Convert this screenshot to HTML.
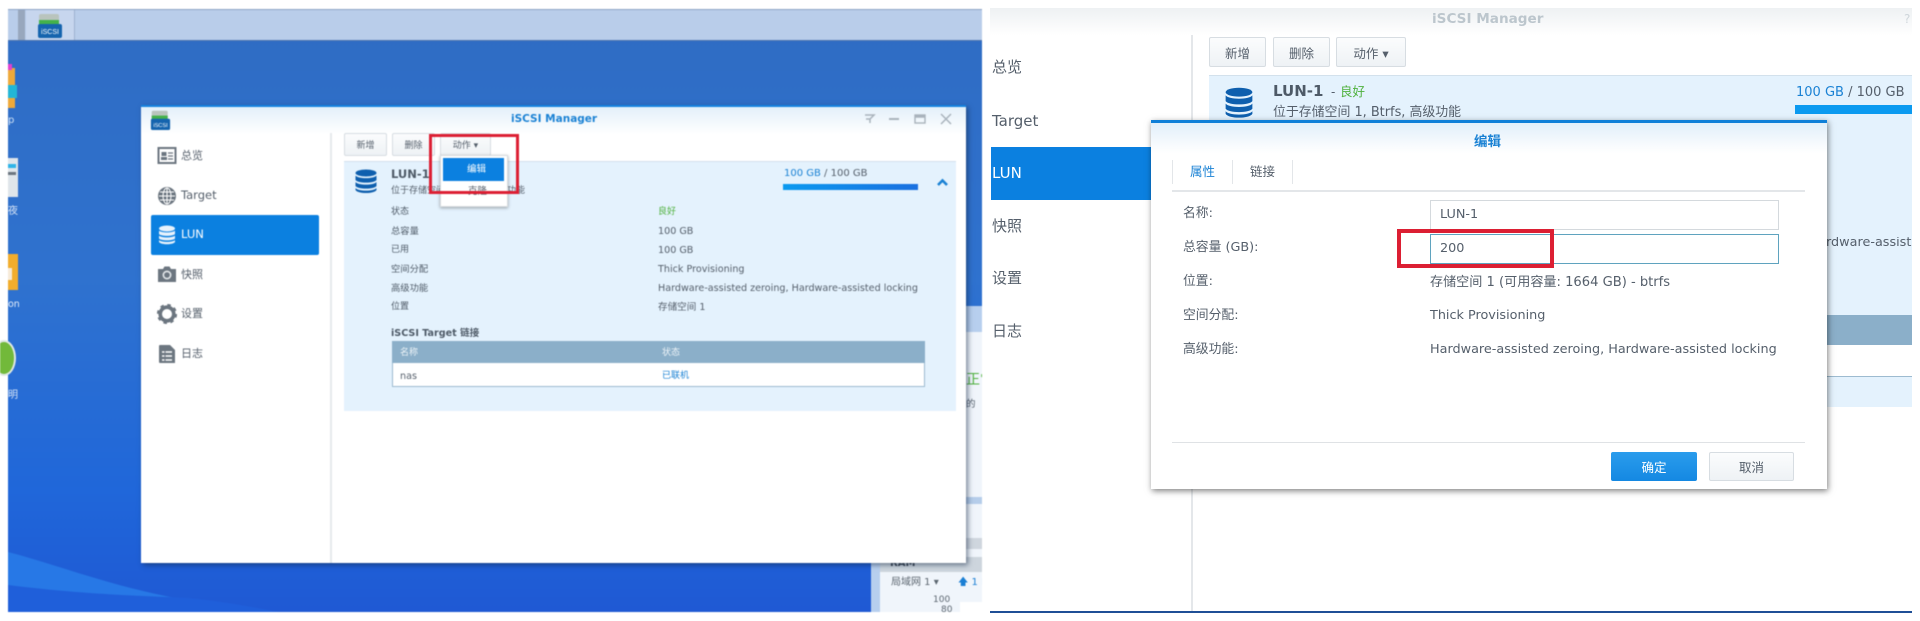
<!DOCTYPE html>
<html lang="zh">
<head>
<meta charset="utf-8">
<title>iSCSI Manager</title>
<style>
html,body{margin:0;padding:0;background:#fff}
body{width:1920px;height:621px;position:relative;overflow:hidden;font-family:"DejaVu Sans","Noto Sans CJK SC",sans-serif;color:#555f6b}
div,span,svg{box-sizing:border-box}
.a{position:absolute}
.t{position:absolute;white-space:nowrap;line-height:1}
.b{font-weight:bold}
.left{position:absolute;left:0;top:0;width:982px;height:621px;overflow:hidden;filter:blur(.6px)}
.right{position:absolute;left:982px;top:0;width:938px;height:621px;overflow:hidden;filter:blur(.25px)}
.btn{position:absolute;background:linear-gradient(#fbfcfd,#eef2f5);border:1px solid #d7dde2;border-radius:2px;text-align:center}
</style>
</head>
<body>
<div class="left">
  <div class="a" style="left:8px;top:9px;width:974px;height:603px;background:linear-gradient(#2f6cc3 0,#2f72cf 45%,#2067da 80%,#1f59d4 100%)"></div>
  <svg class="a" style="left:8px;top:530px" width="974" height="82" viewBox="0 0 974 82">
    <path d="M0 22C70 40 130 70 270 82L0 82Z" fill="#2778e6"/>
    <path d="M0 55C80 65 140 66 180 68C220 72 250 78 270 82L0 82Z" fill="#1f5fda"/>
  </svg>
  <div class="a" style="left:8px;top:9px;width:974px;height:32px;background:#b9cdea;border-top:1px solid #8ea4c6;border-bottom:1px solid #4d74ae"></div>
  <div class="a" style="left:18px;top:10px;width:7px;height:30px;background:#98a7bd"></div>
  <div class="a" style="left:26px;top:10px;width:49px;height:30px;background:#c7d6ee;border-right:1px solid #9fb2cf"></div>
  <svg class="a" style="left:37px;top:13px" width="26" height="26" viewBox="0 0 26 26">
    <rect x="2" y="1" width="20" height="12" rx="2" fill="#b9c4bd"/><rect x="2" y="7" width="20" height="6" fill="#44b24a"/>
    <rect x="1" y="11" width="24" height="14" rx="2" fill="#1564ae"/>
    <text x="13" y="21" font-size="7" fill="#fff" text-anchor="middle" font-family="Liberation Sans,sans-serif">iSCSI</text>
  </svg>

  <!-- desktop icons clipped -->
  <div class="a" style="left:8px;top:68px;width:7px;height:40px;background:#eea93a"></div>
  <div class="a" style="left:8px;top:64px;width:4px;height:6px;background:#e23fd0"></div>
  <div class="a" style="left:8px;top:85px;width:9px;height:13px;background:#23b6d6"></div>
  <div class="t" style="left:8px;top:116px;font-size:10px;color:#cfe0f5">p</div>
  <div class="a" style="left:8px;top:158px;width:10px;height:39px;background:#dfe5ea"></div>
  <div class="a" style="left:8px;top:164px;width:8px;height:4px;background:#2fb4e8"></div>
  <div class="a" style="left:8px;top:172px;width:8px;height:3px;background:#6c7680"></div>
  <div class="t" style="left:8px;top:207px;font-size:10px;color:#d8e5f6">夜</div>
  <div class="a" style="left:8px;top:254px;width:10px;height:36px;background:#f2ad2c"></div>
  <div class="a" style="left:8px;top:268px;width:4px;height:12px;background:#f6ead8"></div>
  <div class="t" style="left:8px;top:300px;font-size:9.5px;color:#e4edf9">on</div>
  <div class="a" style="left:-8px;top:340px;width:24px;height:36px;border-radius:50%;background:#72b93a;border:2px solid #dfe8e4"></div>
  <div class="t" style="left:8px;top:391px;font-size:10px;color:#d8e5f6">明</div>

  <!-- widgets behind the window -->
  <div class="a" style="left:871px;top:306px;width:111px;height:306px;background:#b7cfee"></div>
  <div class="a" style="left:880px;top:332px;width:102px;height:280px;background:#f0f5fb"></div>
  <div class="t" style="left:966px;top:373px;font-size:14px;color:#4fb13d">正常</div>
  <div class="t" style="left:966px;top:400px;font-size:9.5px;color:#55606c">的</div>
  <div class="a" style="left:880px;top:497px;width:102px;height:7px;background:#b5cdea"></div>
  <div class="a" style="left:880px;top:538px;width:102px;height:11px;background:#cfd6de"></div>
  <div class="a" style="left:880px;top:557px;width:102px;height:15px;background:#cdd5dd"></div>
  <div class="t b" style="left:890px;top:559px;font-size:10px;color:#3d4650">RAM</div>
  <div class="t" style="left:891px;top:578px;font-size:10px;color:#5c6670">局域网 1 ▾</div>
  <div class="t" style="left:958px;top:578px;font-size:10px;color:#1b7fd4">🡅 1 K</div>
  <div class="t" style="left:933px;top:596px;font-size:9px;color:#5c6670">100</div>
  <div class="t" style="left:941px;top:606px;font-size:9px;color:#5c6670">80</div>
  <div class="a" style="left:960px;top:602px;width:22px;height:10px;background:#fff"></div>

  <!-- main window -->
  <div class="a" style="left:141px;top:105px;width:825px;height:458px;background:#fff;border-top:2px solid #1683e0;box-shadow:2px 2px 5px rgba(20,40,70,.55)">
    <div class="a" style="left:0;top:0;width:100%;height:27px;background:linear-gradient(#e4f0fa,#fff)"></div>
  </div>
  <svg class="a" style="left:150px;top:110px" width="21" height="20" viewBox="0 0 26 25">
    <rect x="2" y="1" width="20" height="12" rx="2" fill="#b9c4bd"/><rect x="2" y="7" width="20" height="6" fill="#44b24a"/>
    <rect x="1" y="11" width="24" height="14" rx="2" fill="#1564ae"/>
    <text x="13" y="21" font-size="7" fill="#fff" text-anchor="middle" font-family="Liberation Sans,sans-serif">iSCSI</text>
  </svg>
  <div class="t b" style="left:511px;top:114px;font-size:10.5px;color:#1b82d4">iSCSI Manager</div>
  <!-- window controls -->
  <svg class="a" style="left:862px;top:112px" width="96" height="14" viewBox="0 0 96 14" fill="none" stroke="#a9b3bc" stroke-width="1.5">
    <path d="M3 3H12L8 7V11M4 7H8"/>
    <path d="M27 7H37" stroke-width="2"/>
    <rect x="53" y="3" width="10" height="8" stroke-width="1.4"/><path d="M53 4.500H63" stroke-width="2.500"/>
    <path d="M79 2L89 12M89 2L79 12"/>
  </svg>

  <!-- sidebar -->
  <div class="a" style="left:330px;top:133px;width:1.5px;height:430px;background:#e6e9ec"></div>
  <div class="a" style="left:151px;top:215px;width:168px;height:40px;background:#0b80e0;border-radius:2px"></div>
  <svg class="a" style="left:157px;top:146px" width="20" height="20" viewBox="0 0 20 20">
    <rect x="1.500" y="2" width="17" height="15" fill="#fff" stroke="#6c7680" stroke-width="2"/><rect x="4.500" y="6" width="5" height="4" fill="#6c7680"/><rect x="4" y="11" width="6" height="3" fill="#6c7680"/><path d="M11 7H16M11 10H16M11 13H16" stroke="#6c7680" stroke-width="1.300"/>
  </svg>
  <svg class="a" style="left:157px;top:186px" width="20" height="20" viewBox="0 0 20 20" fill="none" stroke="#fff" stroke-width="1">
    <circle cx="10" cy="10" r="9" fill="#6c7680" stroke="none"/><ellipse cx="10" cy="10" rx="4" ry="8"/><path d="M2 10H18M3 6H17M3 14H17M10 2V18"/>
  </svg>
  <svg class="a" style="left:158px;top:225px" width="18" height="20" viewBox="0 0 18 20" fill="#e7f2fc">
    <ellipse cx="9" cy="3.500" rx="8" ry="3"/><path d="M1 5.500C3 8 15 8 17 5.500V9C15 11.500 3 11.500 1 9Z"/><path d="M1 10.500C3 13 15 13 17 10.500V13.500C15 16 3 16 1 13.500Z"/><path d="M1 15C3 17.500 15 17.500 17 15V17C15 20 3 20 1 17Z"/>
  </svg>
  <svg class="a" style="left:157px;top:265px" width="20" height="18" viewBox="0 0 20 18">
    <path d="M1 4H6L7.500 1.500H12.500L14 4H19V17H1Z" fill="#6c7680"/><circle cx="10" cy="10" r="4.500" fill="#dfe3e6"/><circle cx="10" cy="10" r="2.800" fill="#6c7680"/>
  </svg>
  <svg class="a" style="left:157px;top:304px" width="20" height="20" viewBox="0 0 20 20">
    <circle cx="10" cy="10" r="6.800" fill="none" stroke="#6c7680" stroke-width="3.600"/><circle cx="10" cy="10" r="9" fill="none" stroke="#6c7680" stroke-width="2.200" stroke-dasharray="3.500 3.570"/>
  </svg>
  <svg class="a" style="left:158px;top:344px" width="18" height="20" viewBox="0 0 18 20">
    <path d="M2 1H12L17 6V19H2Q1 19 1 18V2Q1 1 2 1Z" fill="#6c7680"/><path d="M4 8H14M4 12H14M4 16H14" stroke="#fff" stroke-width="1.600"/><path d="M7 7V17" stroke="#6c7680" stroke-width="1"/>
  </svg>
  <div class="t" style="left:181px;top:150px;font-size:11px">总览</div>
  <div class="t" style="left:181px;top:190px;font-size:11.500px">Target</div>
  <div class="t" style="left:181px;top:229px;font-size:11.500px;color:#fff">LUN</div>
  <div class="t" style="left:181px;top:269px;font-size:11px">快照</div>
  <div class="t" style="left:181px;top:308px;font-size:11px">设置</div>
  <div class="t" style="left:181px;top:348px;font-size:11px">日志</div>

  <!-- toolbar -->
  <div class="btn" style="left:344px;top:133px;width:43px;height:23px;font-size:9px;line-height:24px">新增</div>
  <div class="btn" style="left:392px;top:133px;width:43px;height:23px;font-size:9px;line-height:24px">删除</div>
  <div class="btn" style="left:440px;top:133px;width:51px;height:23px;font-size:9px;line-height:24px">动作 ▾</div>

  <!-- panel -->
  <div class="a" style="left:344px;top:161px;width:612px;height:250px;background:#e4f2fd;border-top:1px solid #d3e1ec"></div>
  <svg class="a" style="left:355px;top:169px" width="22" height="25" viewBox="0 0 22 25" fill="#0e5fae">
    <ellipse cx="11" cy="4" rx="10.500" ry="3.500"/><path d="M.5 6.500C3 10 19 10 21.500 6.500V11C19 14.500 3 14.500 .5 11Z"/><path d="M.5 13C3 16.500 19 16.500 21.500 13V17C19 20.500 3 20.500 .5 17Z"/><path d="M.5 19C3 22.500 19 22.500 21.500 19V21C19 25 3 25 .5 21Z"/>
  </svg>
  <div class="t b" style="left:391px;top:169px;font-size:11.500px;color:#4e5a67">LUN-1</div>
  <div class="t" style="left:391px;top:187px;font-size:9px">位于存储空间</div>
  <div class="t" style="left:507px;top:187px;font-size:9px">功能</div>
  <div class="t" style="left:391px;top:208px;font-size:9px;color:#4e5a67">状态</div>
  <div class="t" style="left:391px;top:227px;font-size:9.300px;color:#4e5a67">总容量</div>
  <div class="t" style="left:391px;top:246px;font-size:9px;color:#4e5a67">已用</div>
  <div class="t" style="left:391px;top:265px;font-size:9.300px;color:#4e5a67">空间分配</div>
  <div class="t" style="left:391px;top:284px;font-size:9.300px;color:#4e5a67">高级功能</div>
  <div class="t" style="left:391px;top:303px;font-size:9px;color:#4e5a67">位置</div>
  <div class="t" style="left:658px;top:208px;font-size:9px;color:#4fb13d">良好</div>
  <div class="t" style="left:658px;top:227px;font-size:9.600px">100 GB</div>
  <div class="t" style="left:658px;top:246px;font-size:9.600px">100 GB</div>
  <div class="t" style="left:658px;top:265px;font-size:9.600px">Thick Provisioning</div>
  <div class="t" style="left:658px;top:284px;font-size:9.600px">Hardware-assisted zeroing, Hardware-assisted locking</div>
  <div class="t" style="left:658px;top:303px;font-size:9.600px">存储空间 1</div>
  <div class="t" style="left:784px;top:169px;font-size:10px"><span style="color:#1b82d4">100 GB</span> / 100 GB</div>
  <div class="a" style="left:783px;top:184px;width:135px;height:6px;background:linear-gradient(90deg,#0b9af0,#1a70e0)"></div>
  <svg class="a" style="left:936px;top:177px" width="13" height="10" viewBox="0 0 13 10"><path d="M2 8L6.500 3.500L11 8" fill="none" stroke="#1b82d4" stroke-width="2.600"/></svg>
  <div class="t b" style="left:391px;top:329px;font-size:9.600px;color:#4e5a67">iSCSI Target 链接</div>
  <div class="a" style="left:392px;top:341px;width:533px;height:46px;background:#fff;border:1px solid #9dbbd0;border-top:0">
    <div class="a" style="left:-1px;top:0;width:533px;height:22px;background:#8bafc9"></div>
  </div>
  <div class="t" style="left:400px;top:349px;font-size:9px;color:#eef4f8">名称</div>
  <div class="t" style="left:662px;top:349px;font-size:9px;color:#eef4f8">状态</div>
  <div class="t" style="left:400px;top:372px;font-size:9.600px">nas</div>
  <div class="t" style="left:662px;top:372px;font-size:9px;color:#1b82d4">已联机</div>

  <!-- dropdown -->
  <div class="a" style="left:440px;top:155px;width:68px;height:52px;background:#fff;border:1px solid #d8dcdf;box-shadow:0 1px 3px rgba(0,0,0,.35)"></div>
  <div class="a" style="left:443px;top:158px;width:61px;height:23px;background:#0b80e0"></div>
  <div class="t" style="left:467px;top:165px;font-size:9.500px;color:#fff">编辑</div>
  <div class="t" style="left:468px;top:187px;font-size:9.500px">克隆</div>
  <div class="a" style="left:429px;top:134px;width:90px;height:60px;border:3px solid #dc1f33"></div>
</div>

<div class="right">
  <!-- offset: left = x - 982 -->
  <div class="a" style="left:8px;top:8px;width:922px;height:27px;background:linear-gradient(#eef1f3,#fff)"></div>
  <div class="t b" style="left:450px;top:13px;font-size:13.600px;color:#bcc6cd">iSCSI Manager</div>
  <div class="t" style="left:922px;top:13px;font-size:12px;color:#cfd6db">?</div>
  <div class="a" style="left:209px;top:35px;width:1.500px;height:577px;background:#e4e7ea"></div>
  <div class="a" style="left:8px;top:611px;width:922px;height:2px;background:#1f4f96"></div>
  <div class="a" style="left:9px;top:147px;width:200px;height:53px;background:#0b80e0"></div>
  <div class="t" style="left:10px;top:60px;font-size:15px">总览</div>
  <div class="t" style="left:10px;top:114px;font-size:15px">Target</div>
  <div class="t" style="left:10px;top:166px;font-size:15px;color:#fff">LUN</div>
  <div class="t" style="left:10px;top:219px;font-size:15px">快照</div>
  <div class="t" style="left:10px;top:271px;font-size:15px">设置</div>
  <div class="t" style="left:10px;top:324px;font-size:15px">日志</div>

  <div class="btn" style="left:227px;top:37px;width:57px;height:30px;font-size:12.500px;line-height:31px">新增</div>
  <div class="btn" style="left:291px;top:37px;width:57px;height:30px;font-size:12.500px;line-height:31px">删除</div>
  <div class="btn" style="left:354px;top:37px;width:70px;height:30px;font-size:12.500px;line-height:31px">动作 ▾</div>

  <div class="a" style="left:227px;top:75px;width:703px;height:332px;background:#e4f2fd;border-top:1px solid #d3e1ec"></div>
  <svg class="a" style="left:243px;top:87px" width="28" height="32" viewBox="0 0 22 25" fill="#0e5fae">
    <ellipse cx="11" cy="4" rx="10.500" ry="3.500"/><path d="M.5 6.500C3 10 19 10 21.500 6.500V11C19 14.500 3 14.500 .5 11Z"/><path d="M.5 13C3 16.500 19 16.500 21.500 13V17C19 20.500 3 20.500 .5 17Z"/><path d="M.5 19C3 22.500 19 22.500 21.500 19V21C19 25 3 25 .5 21Z"/>
  </svg>
  <div class="t b" style="left:291px;top:84px;font-size:15px;color:#4e5a67">LUN-1</div>
  <div class="t" style="left:349px;top:86px;font-size:12px">-</div>
  <div class="t" style="left:358px;top:86px;font-size:12.500px;color:#4fb13d">良好</div>
  <div class="t" style="left:291px;top:107px;font-size:12.900px">位于存储空间 1, Btrfs, 高级功能</div>
  <div class="t" style="left:814px;top:86px;font-size:13px"><span style="color:#1b82d4">100 GB</span> / 100 GB</div>
  <div class="a" style="left:813px;top:105px;width:117px;height:9px;background:#0b9af0"></div>
  <div class="t" style="left:844px;top:237px;font-size:12.800px;width:86px;overflow:hidden">rdware-assisted</div>
  <div class="a" style="left:844px;top:315px;width:86px;height:30px;background:#8bafc9"></div>
  <div class="a" style="left:844px;top:345px;width:86px;height:32px;background:#fff;border-bottom:1px solid #9dbbd0"></div>

  <!-- dialog -->
  <div class="a" style="left:169px;top:120px;width:676px;height:369px;background:#fff;border-top:3px solid #0f7fd8;box-shadow:1px 2px 6px rgba(0,0,0,.5)">
    <div class="a" style="left:0;top:0;width:100%;height:30px;background:linear-gradient(#e2effa,#fff)"></div>
  </div>
  <div class="t b" style="left:492px;top:136px;font-size:13.500px;color:#1b82d4">编辑</div>
  <div class="a" style="left:190px;top:160px;width:1px;height:24px;background:#e3e6e9"></div>
  <div class="a" style="left:250px;top:160px;width:1px;height:24px;background:#e3e6e9"></div>
  <div class="a" style="left:310px;top:160px;width:1px;height:24px;background:#e3e6e9"></div>
  <div class="a" style="left:190px;top:190px;width:633px;height:1.500px;background:#e3e6e9"></div>
  <div class="t b" style="left:208px;top:166px;font-size:12.500px;color:#1b82d4;font-weight:normal">属性</div>
  <div class="t" style="left:268px;top:166px;font-size:12.500px">链接</div>
  <div class="t" style="left:201px;top:208px;font-size:12.800px">名称:</div>
  <div class="t" style="left:201px;top:242px;font-size:12.800px">总容量 (GB):</div>
  <div class="t" style="left:201px;top:276px;font-size:12.800px">位置:</div>
  <div class="t" style="left:201px;top:310px;font-size:12.800px">空间分配:</div>
  <div class="t" style="left:201px;top:344px;font-size:12.800px">高级功能:</div>
  <div class="a" style="left:448px;top:200px;width:349px;height:30px;border:1px solid #d4d9dd;background:#fff"></div>
  <div class="a" style="left:448px;top:234px;width:349px;height:30px;border:1px solid #5fa3bf;background:#fff"></div>
  <div class="t" style="left:458px;top:209px;font-size:12.800px">LUN-1</div>
  <div class="t" style="left:458px;top:243px;font-size:12.800px">200</div>
  <div class="t" style="left:448px;top:276px;font-size:13.100px">存储空间 1 (可用容量: 1664 GB) - btrfs</div>
  <div class="t" style="left:448px;top:310px;font-size:12.800px">Thick Provisioning</div>
  <div class="t" style="left:448px;top:344px;font-size:12.800px">Hardware-assisted zeroing, Hardware-assisted locking</div>
  <div class="a" style="left:415px;top:229px;width:157px;height:39px;border:4px solid #dc1f33"></div>
  <div class="a" style="left:190px;top:442px;width:633px;height:1px;background:#dfe2e5"></div>
  <div class="a" style="left:629px;top:452px;width:86px;height:29px;background:linear-gradient(#2a9cec,#1488e2);border-radius:2px;color:#fff;text-align:center;font-size:12.500px;line-height:32px">确定</div>
  <div class="btn" style="left:727px;top:452px;width:85px;height:29px;font-size:12.500px;line-height:30px">取消</div>
</div>
</body>
</html>
